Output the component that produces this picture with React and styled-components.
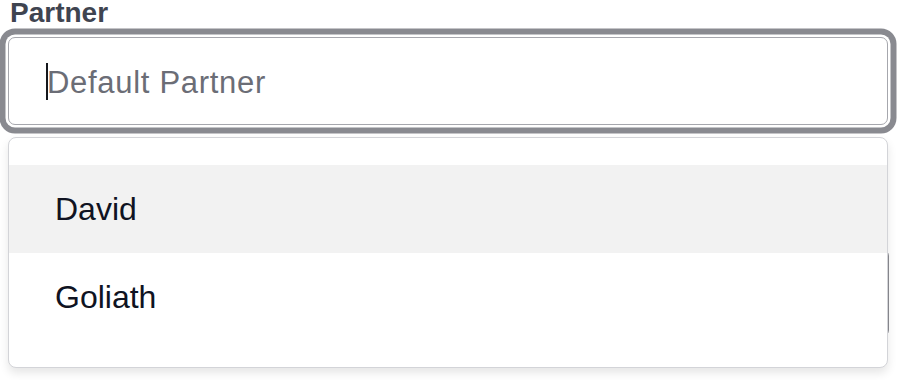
import React from 'react'
import styled, { createGlobalStyle } from 'styled-components'

const Global = createGlobalStyle`
  body {
    margin: 0;
    background: #fff;
    font-family: "Liberation Sans", Arial, sans-serif;
  }
`

const Page = styled.div`
  position: relative;
  width: 898px;
  height: 380px;
  overflow: hidden;
  padding: 0 10px 0 8px;
  box-sizing: border-box;
`

const Label = styled.label`
  display: block;
  font-size: 28px;
  line-height: 26px;
  font-weight: 700;
  color: #3f4450;
  padding-left: 2px;
  margin-bottom: 11px;
`

const InputWrap = styled.div`
  position: relative;
`

const Input = styled.input`
  display: block;
  width: 880px;
  height: 88px;
  box-sizing: border-box;
  border: 1.5px solid #a6a7ad;
  border-radius: 7px;
  padding: 3px 0 0 38px;
  font-family: inherit;
  font-size: 31px;
  letter-spacing: 0.7px;
  color: #1f2430;
  outline: none;
  box-shadow: 0 0 0 2.5px #fff, 0 0 0 8.5px #898a90;

  &::placeholder {
    color: #6b6d76;
  }
`

const Caret = styled.span`
  position: absolute;
  left: 38px;
  top: 26px;
  width: 2px;
  height: 37px;
  background: #15171c;
`

const NextInput = styled.div`
  margin-top: 124px;
  margin-left: -0.5px;
  width: 881.5px;
  height: 88px;
  box-sizing: border-box;
  border: 1.5px solid #8b8c92;
  border-radius: 7px;
`

const Menu = styled.ul`
  position: absolute;
  top: 137px;
  left: 8px;
  width: 880px;
  box-sizing: border-box;
  margin: 0;
  padding: 27px 0 26px;
  list-style: none;
  background: #fff;
  border: 1px solid #d3d4d8;
  border-radius: 8px;
  box-shadow: 0 5px 10px rgba(0, 0, 0, 0.1);
  overflow: hidden;
  z-index: 2;
`

const Option = styled.li`
  display: flex;
  align-items: center;
  height: 88px;
  padding-left: 46px;
  font-size: 32px;
  color: #0f1322;
  background: ${p => (p.$active ? '#f2f2f2' : '#fff')};
`

const partners = ['David', 'Goliath']

export default function App() {
  return (
    <>
      <Global />
      <Page>
        <Label htmlFor="partner">Partner</Label>
        <InputWrap>
          <Input id="partner" placeholder="Default Partner" readOnly />
          <Caret />
        </InputWrap>
        <NextInput />
        <Menu>
          {partners.map((name, i) => (
            <Option key={name} $active={i === 0}>{name}</Option>
          ))}
        </Menu>
      </Page>
    </>
  )
}
